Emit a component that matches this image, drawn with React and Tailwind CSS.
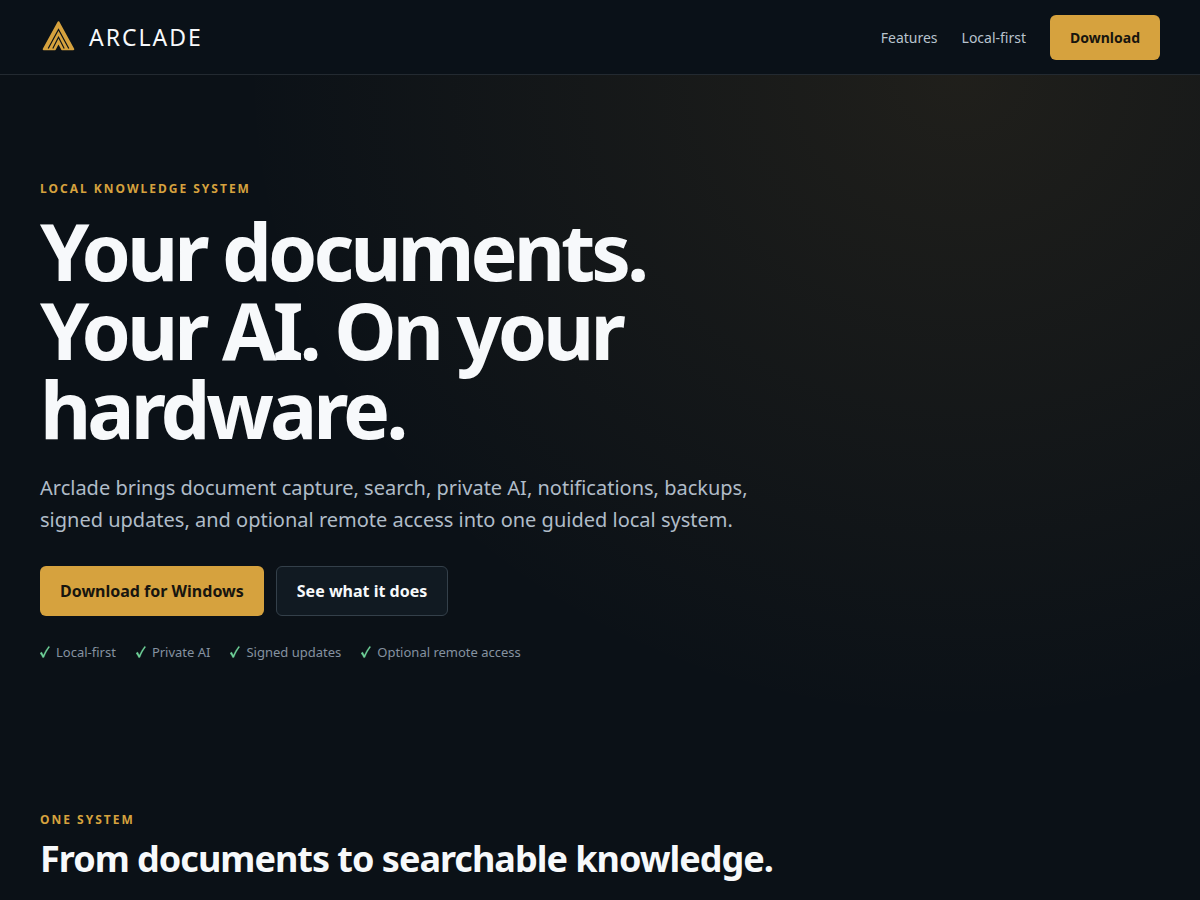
const trustItems = ['Local-first', 'Private AI', 'Signed updates', 'Optional remote access']

function Logo() {
  return (
    <svg className="w-9 h-9" viewBox="0 0 36 36" fill="none" aria-hidden="true">
      <path d="M18.5 3.2 33.3 30.2H3.7Z" fill="#d6a23e" stroke="#d6a23e" strokeWidth="2" strokeLinejoin="round" />
      <path d="M8.2 29.5 18.5 10.5 28.8 29.5" stroke="#0a1118" strokeWidth="1.2" />
      <path d="M12.8 29.5 18.5 18.2 24.2 29.5" stroke="#0a1118" strokeWidth="1.1" />
      <path d="M15 32 18.5 25.5 22 32Z" fill="#0a1118" />
    </svg>
  )
}

function Check() {
  return (
    <svg className="w-[10px] h-5" viewBox="0 0 10 20" aria-hidden="true">
      <path
        d="M0 11.2 1.7 10 3.3 13.2C4.8 9.8 6.6 6.8 8.7 4.2L9.7 4.9C7.2 8.1 5.3 11.6 3.9 15.6H2.6C2 13.9 1.1 12.4 0 11.2Z"
        fill="#6fd39a"
        stroke="#6fd39a"
        strokeWidth="0.3"
      />
    </svg>
  )
}

function Eyebrow({ children }) {
  return (
    <p className="text-xs leading-5 font-bold uppercase tracking-[2px] text-[#d6a23e]">{children}</p>
  )
}

function Header() {
  return (
    <header className="flex items-center justify-between px-10 h-[75px] bg-[#0a1118] border-b border-[#232a31]">
      <a href="#top" className="flex items-center gap-[13px]">
        <Logo />
        <span className="text-[23px] leading-8 tracking-[2px] text-[#f7f9fb]">ARCLADE</span>
      </a>
      <nav className="flex items-center gap-6 text-sm leading-[23px] text-[#b8c3ce]">
        <a href="#features">Features</a>
        <a href="#local">Local-first</a>
        <a
          href="#download"
          className="px-5 py-[11px] rounded-md bg-[#d6a23e] font-bold text-[#17150f]"
        >
          Download
        </a>
      </nav>
    </header>
  )
}

function Hero() {
  return (
    <section className="px-10 pt-[104px] pb-[76px] bg-[radial-gradient(ellipse_60%_98%_at_80%_0%,rgba(214,155,62,0.1),transparent)]">
      <div className="max-w-[760px]">
        <Eyebrow>Local knowledge system</Eyebrow>
        <h1 className="mt-3 max-w-[700px] text-[79px] leading-[79px] font-bold tracking-[-4px] text-[#f7f9fb]">
          Your documents. Your AI. On your hardware.
        </h1>
        <p className="mt-6 text-xl leading-8 text-[#b0bcc8]">
          Arclade brings document capture, search, private AI, notifications, backups, signed updates,
          and optional remote access into one guided local system.
        </p>
        <div className="flex flex-wrap gap-3 mt-[30px]">
          <button type="button" className="h-[50px] px-5 rounded-md bg-[#d6a23e] font-bold text-[#17150f]">
            Download for Windows
          </button>
          <button
            type="button"
            className="h-[50px] px-5 rounded-md border border-[#34404a] bg-[#111a22] font-bold text-[#f7f9fb]"
          >
            See what it does
          </button>
        </div>
        <ul className="flex flex-wrap gap-5 mt-[26px] text-[13px] leading-5 text-[#8592a0]">
          {trustItems.map((item) => (
            <li key={item} className="flex gap-[6px]">
              <Check />
              {item}
            </li>
          ))}
        </ul>
      </div>
    </section>
  )
}

function App() {
  return (
    <div
      id="top"
      className="min-h-screen bg-[#0b1117] font-['Noto_Sans','DejaVu_Sans',sans-serif] text-[#f7f9fb]"
    >
      <Header />
      <main>
        <Hero />
        <section id="features" className="px-10 pt-[72px] pb-5">
          <Eyebrow>One system</Eyebrow>
          <h2 className="mt-[7px] text-4xl leading-[44px] font-bold tracking-[-1px]">
            From documents to searchable knowledge.
          </h2>
        </section>
      </main>
    </div>
  )
}

export default App
